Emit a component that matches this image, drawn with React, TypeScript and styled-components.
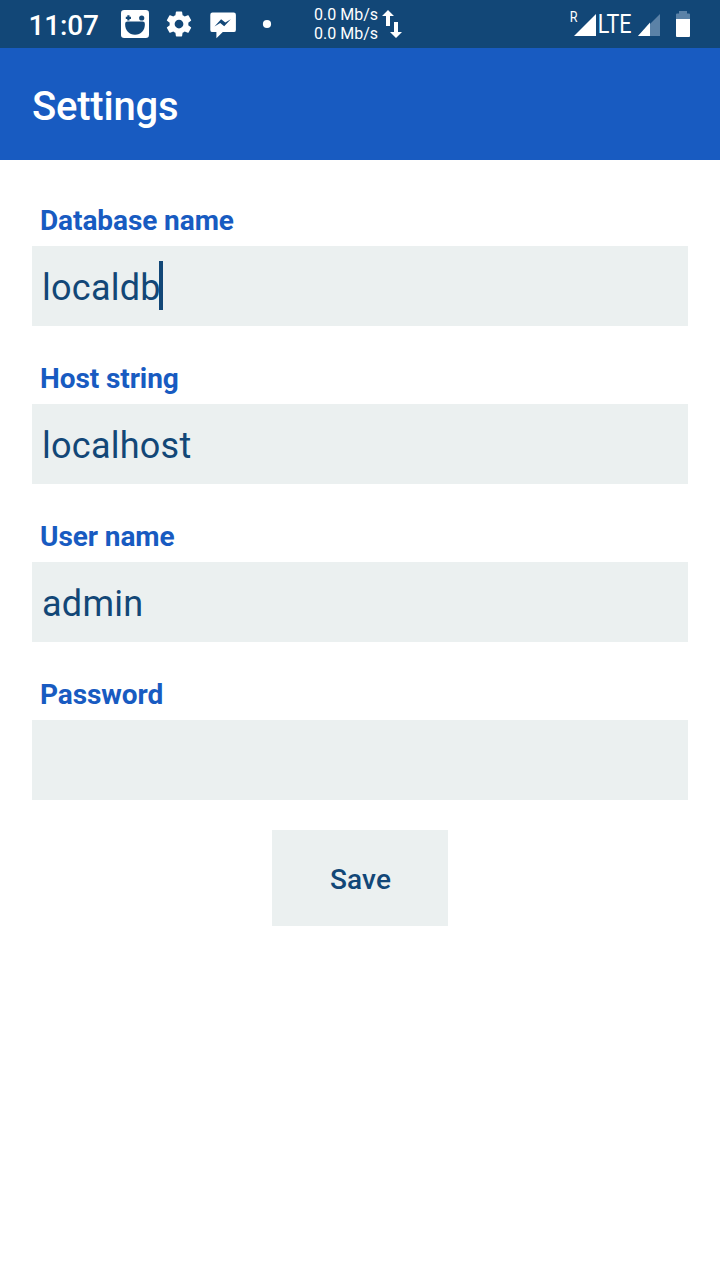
import React from "react";
import styled, { createGlobalStyle } from "styled-components";

const GlobalStyle = createGlobalStyle`
  * { box-sizing: border-box; }
  body { margin: 0; background: #fff; font-family: Roboto, sans-serif; }
`;

const Screen = styled.div`
  display: flex;
  flex-direction: column;
  width: 720px;
  height: 1280px;
  background: #fff;
`;

const StatusBar = styled.div`
  display: flex;
  align-items: flex-start;
  height: 48px;
  padding: 0 29px 0 28px;
  background: #124777;
  color: #fff;
`;

const Clock = styled.span`
  width: 92px;
  padding: 9px 0 0 0.4px;
  font-size: 28px;
  font-weight: 500;
  line-height: 33px;
  letter-spacing: -0.1px;
`;

const Icon = styled.svg<{ $gap?: number }>`
  display: block;
  flex: none;
  margin-right: ${(p) => p.$gap ?? 0}px;
`;

const Rates = styled.div`
  display: flex;
  flex-direction: column;
  width: 68px;
  padding-top: 5px;
  font-size: 16px;
  line-height: 19px;
  white-space: nowrap;
`;

const Signals = styled.div`
  display: flex;
  margin-left: auto;
`;

const Roaming = styled.span`
  width: 4px;
  padding: 8px 0 0 1px;
  font-size: 15px;
  line-height: 18px;
  transform: scaleX(0.84);
  transform-origin: left;
`;

const Network = styled.span`
  width: 41px;
  padding: 10px 0 0 2px;
  font-size: 25px;
  line-height: 29px;
  transform: scaleX(0.86);
  transform-origin: left;
`;

const AppBar = styled.header`
  display: flex;
  align-items: center;
  height: 112px;
  padding: 6px 32px 0;
  background: #185bc1;
`;

const Title = styled.h1`
  margin: 0;
  color: #fff;
  font-size: 40px;
  font-weight: 500;
  line-height: 48px;
  letter-spacing: -0.2px;
`;

const Form = styled.main`
  display: flex;
  flex-direction: column;
  align-items: stretch;
  padding: 40px 32px 0;
`;

const Field = styled.label`
  display: flex;
  flex-direction: column;
  height: 158px;
`;

const FieldLabel = styled.span`
  height: 46px;
  padding: 4px 8px 0;
  color: #185bc1;
  font-size: 28px;
  font-weight: 700;
  line-height: 33px;
  letter-spacing: -0.08px;
`;

const FieldBox = styled.span`
  display: flex;
  align-items: center;
  height: 80px;
  padding: 4px 10px 0;
  background: #ebf0f0;
  color: #124777;
  font-size: 36px;
  line-height: 48px;
  letter-spacing: 0.25px;
`;

const Caret = styled.span`
  width: 4px;
  height: 49px;
  margin: -6px 0 0 -1.3px;
  background: #124777;
`;

const SaveButton = styled.button`
  align-self: center;
  width: 176px;
  height: 96px;
  margin-top: -2px;
  padding: 3px 0 0 1px;
  border: 0;
  background: #ebf0f0;
  color: #124777;
  font: 500 28px/33px Roboto, sans-serif;
  letter-spacing: 0.15px;
`;

const fields = [
  { label: "Database name", value: "localdb", active: true },
  { label: "Host string", value: "localhost" },
  { label: "User name", value: "admin" },
  { label: "Password", value: "" },
];

export default function App() {
  return (
    <Screen>
      <GlobalStyle />
      <StatusBar>
        <Clock>11:07</Clock>
        <Icon width="30" height="48" viewBox="120 0 30 48" $gap={14}>
          <rect x="121" y="10" width="28" height="28" rx="3.2" fill="#fff" />
          <path d="M127.3 15.3h2.2v1.500h1.500v2.200h-1.500v1.500h-2.200V19h-1.500v-2.200h1.500z" fill="#124777" />
          <circle cx="141.7" cy="18" r="2.6" fill="#124777" />
          <path d="M127.500 21.600h15q2.400 0 2.400 2.400c0 6.500-4 10.800-9.900 10.800s-9.900-4.300-9.900-10.800q0-2.400 2.400-2.400z" fill="#124777" />
        </Icon>
        <Icon width="30" height="48" viewBox="0 -7.2 24 38.4" $gap={16}>
          <path fill="#fff" d="M19.430 12.980c.040-.320.070-.640.070-.980s-.030-.660-.070-.980l2.110-1.650c.190-.150.240-.420.120-.640l-2-3.460c-.120-.220-.390-.300-.610-.220l-2.490 1c-.520-.400-1.080-.730-1.690-.980l-.380-2.650C14.460 2.180 14.250 2 14 2h-4c-.250 0-.460.180-.490.420l-.380 2.650c-.610.250-1.170.590-1.690.980l-2.490-1c-.230-.090-.490 0-.610.220l-2 3.460c-.130.220-.070.490.120.640l2.110 1.650c-.040.320-.070.650-.070.980s.030.660.070.980l-2.110 1.650c-.190.150-.240.420-.120.640l2 3.460c.120.220.390.300.610.220l2.490-1c.520.400 1.080.730 1.690.980l.380 2.650c.030.240.240.420.490.420h4c.250 0 .460-.180.490-.420l.380-2.650c.610-.250 1.170-.590 1.690-.980l2.490 1c.230.090.490 0 .610-.220l2-3.460c.120-.220.070-.490-.120-.640l-2.110-1.650zM12 15.500c-1.930 0-3.500-1.570-3.500-3.500s1.570-3.500 3.500-3.500 3.500 1.570 3.500 3.500-1.570 3.500-3.500 3.500z" />
        </Icon>
        <Icon width="28" height="48" viewBox="210 0 28 48" $gap={22}>
          <path d="M212.500 12.500h21.200q2.200 0 2.200 2.200v15.200q0 2.200-2.200 2.200h-10.900l-6.400 6.200v-6.200h-3.900q-2.200 0-2.200-2.200V14.700q0-2.200 2.200-2.200z" fill="#fff" />
          <path d="M214.500 26.600l6.600-7.400 4.200 3.300 5.500-3.300-6.600 7.100-4-3.200z" fill="#124777" />
        </Icon>
        <Icon width="16" height="48" viewBox="260 0 16 48" $gap={38}>
          <circle cx="267" cy="24" r="4.100" fill="#fff" />
        </Icon>
        <Rates>
          <span>0.0 Mb/s</span>
          <span>0.0 Mb/s</span>
        </Rates>
        <Icon width="22" height="48" viewBox="382 0 22 48">
          <path d="M388 10l6 6h-4v10h-4V16h-4zM394 22h4v10h4l-6 6-6-6h4z" fill="#fff" />
        </Icon>
        <Signals>
          <Roaming>R</Roaming>
          <Icon width="23" height="48" viewBox="573 0 23 48">
            <path d="M596 14v22h-22z" fill="#fff" />
          </Icon>
          <Network>LTE</Network>
          <Icon width="23" height="48" viewBox="637 0 23 48" $gap={15}>
            <path d="M660 14v22h-22z" fill="#5b82a7" />
            <path d="M650 22.500v13.500h-12z" fill="#fff" />
          </Icon>
          <Icon width="16" height="48" viewBox="675 0 16 48">
            <path d="M676 19v-4.500q0-1 1-1h2V11h8v2.500h2q1 0 1 1V19z" fill="#5b82a7" />
            <path d="M676 19h14v17q0 1-1 1h-12q-1 0-1-1z" fill="#fff" />
          </Icon>
        </Signals>
      </StatusBar>
      <AppBar>
        <Title>Settings</Title>
      </AppBar>
      <Form>
        {fields.map((f) => (
          <Field key={f.label}>
            <FieldLabel>{f.label}</FieldLabel>
            <FieldBox>
              <span>{f.value}</span>
              {f.active && <Caret />}
            </FieldBox>
          </Field>
        ))}
        <SaveButton type="button">Save</SaveButton>
      </Form>
    </Screen>
  );
}
